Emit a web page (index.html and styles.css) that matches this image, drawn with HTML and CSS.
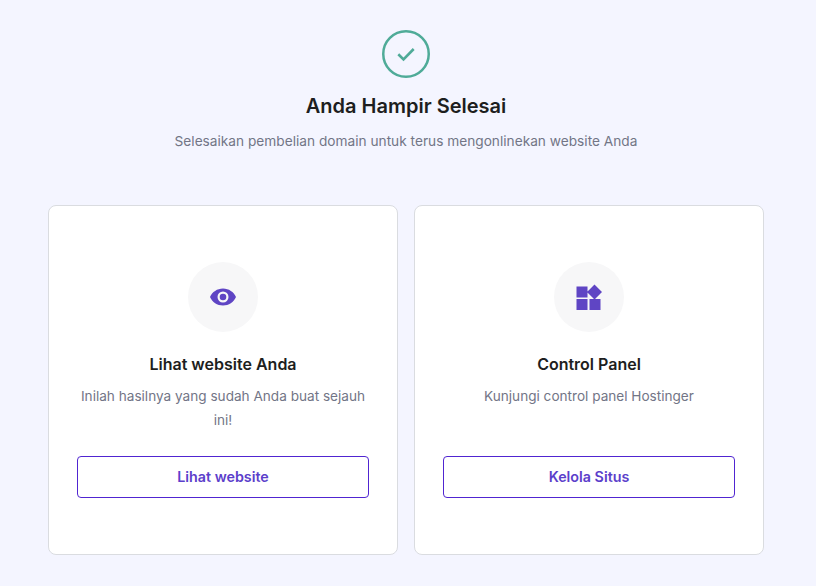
FILE: index.html
```html
<html>
<head>
<title>Anda Hampir Selesai</title>
<link rel="stylesheet" href="styles.css">
</head>
<body>
<div class="page">
  <div class="header">
    <svg class="check" width="48" height="48" viewBox="0 0 48 48">
      <circle cx="24" cy="24" r="22.75" fill="none" stroke="#4fab98" stroke-width="2.5"/>
      <path d="M16.300 24.300l5.200 5.100 10.200-10.400" fill="none" stroke="#4fab98" stroke-width="2.600"/>
    </svg>
    <h1>Anda Hampir Selesai</h1>
    <p>Selesaikan pembelian domain untuk terus mengonlinekan website Anda</p>
  </div>
  <div class="cards">
    <div class="card">
      <div class="icon">
        <svg width="26" height="26" viewBox="0 0 26 26">
          <path fill="#5f45c4" fill-rule="evenodd" d="M13 4.500c5.800 0 10.800 3.500 13 8.500-2.200 5-7.200 8.500-13 8.500S2.200 18 0 13C2.200 8 7.200 4.500 13 4.500zM13 7.500a5.500 5.500 0 1 0 0 11 5.500 5.500 0 0 0 0-11zM13 9.700a3.300 3.300 0 1 1 0 6.600 3.300 3.300 0 0 1 0-6.600z"/>
        </svg>
      </div>
      <h2>Lihat website Anda</h2>
      <p class="desc">Inilah hasilnya yang sudah Anda buat sejauh ini!</p>
      <a class="btn">Lihat website</a>
    </div>
    <div class="card">
      <div class="icon">
        <svg width="26" height="26" viewBox="0 0 26 26">
          <path fill="#5f45c4" d="M.5 2.500h11v11H.5zM.5 15h11v11H.5zM13.500 15h11v11h-11zM18.500.5L26 8l-7.500 7.500L11 8z"/>
        </svg>
      </div>
      <h2>Control Panel</h2>
      <p class="desc">Kunjungi control panel Hostinger</p>
      <a class="btn">Kelola Situs</a>
    </div>
  </div>
</div>
</body>
</html>
```
FILE: styles.css
```css
html, body {
  margin: 0;
  height: 100%;
}
body {
  background-color: #f4f5ff;
  font-family: Inter, "Open Sans", sans-serif;
  color: #1d1e20;
  overflow: hidden;
}
.page {
  width: 716px;
  margin-left: 48px;
  padding-top: 30px;
}
.header {
  text-align: center;
}
.check {
  display: block;
  margin: 0 auto;
}
h1 {
  font-size: 20px;
  line-height: 28px;
  font-weight: 600;
  margin: 14px 0 0 0;
}
.header p {
  font-size: 13.7px;
  line-height: 20px;
  color: #727586;
  margin: 11px 0 0 0;
}
.cards {
  display: flex;
  gap: 16px;
  margin-top: 54px;
}
.card {
  box-sizing: border-box;
  width: 350px;
  height: 350px;
  background-color: #ffffff;
  border: 1px solid #dadce0;
  border-radius: 8px;
  padding: 56px 28px 0 28px;
  text-align: center;
  display: flex;
  flex-direction: column;
  align-items: center;
}
.icon {
  width: 70px;
  height: 70px;
  border-radius: 50%;
  background-color: #f7f7f8;
  display: flex;
  align-items: center;
  justify-content: center;
}
h2 {
  font-size: 16px;
  line-height: 24px;
  font-weight: 600;
  margin: 20px 0 0 0;
}
.desc {
  font-size: 13.6px;
  line-height: 24px;
  color: #727586;
  margin: 8px 0 0 0;
  height: 48px;
}
.btn {
  box-sizing: border-box;
  width: 292px;
  height: 42px;
  margin-top: 24px;
  padding-bottom: 1px;
  border: 1px solid #5025d1;
  border-radius: 4px;
  color: #5c3fcb;
  font-size: 14.3px;
  font-weight: 600;
  display: flex;
  align-items: center;
  justify-content: center;
}
```
